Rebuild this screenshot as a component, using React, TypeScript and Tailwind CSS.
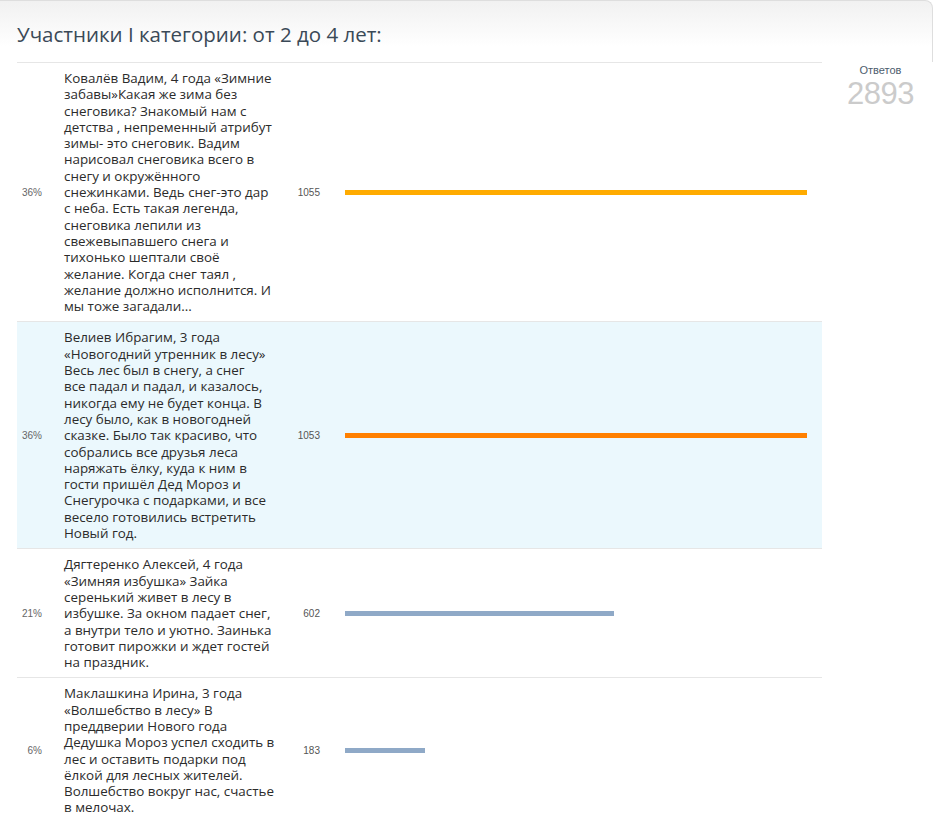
import React from "react";

interface PollOption {
  percent: string;
  votes: number;
  lines: string[];
  barWidth: number;
  barColor: string;
  highlight?: boolean;
}

const OPTIONS: PollOption[] = [
  {
    percent: "36%",
    votes: 1055,
    barWidth: 462,
    barColor: "bg-[#ffab00]",
    lines: [
      "Ковалёв Вадим, 4 года «Зимние",
      "забавы»Какая же зима без",
      "снеговика? Знакомый нам с",
      "детства , непременный атрибут",
      "зимы- это снеговик. Вадим",
      "нарисовал снеговика всего в",
      "снегу и окружённого",
      "снежинками. Ведь снег-это дар",
      "с неба. Есть такая легенда,",
      "снеговика лепили из",
      "свежевыпавшего снега и",
      "тихонько шептали своё",
      "желание. Когда снег таял ,",
      "желание должно исполнится. И",
      "мы тоже загадали...",
    ],
  },
  {
    percent: "36%",
    votes: 1053,
    barWidth: 462,
    barColor: "bg-[#ff8000]",
    highlight: true,
    lines: [
      "Велиев Ибрагим, 3 года",
      "«Новогодний утренник в лесу»",
      "Весь лес был в снегу, а снег",
      "все падал и падал, и казалось,",
      "никогда ему не будет конца. В",
      "лесу было, как в новогодней",
      "сказке. Было так красиво, что",
      "собрались все друзья леса",
      "наряжать ёлку, куда к ним в",
      "гости пришёл Дед Мороз и",
      "Снегурочка с подарками, и все",
      "весело готовились встретить",
      "Новый год.",
    ],
  },
  {
    percent: "21%",
    votes: 602,
    barWidth: 269,
    barColor: "bg-[#8fa9c7]",
    lines: [
      "Дягтеренко Алексей, 4 года",
      "«Зимняя избушка» Зайка",
      "серенький живет в лесу в",
      "избушке. За окном падает снег,",
      "а внутри тело и уютно. Заинька",
      "готовит пирожки и ждет гостей",
      "на праздник.",
    ],
  },
  {
    percent: "6%",
    votes: 183,
    barWidth: 80,
    barColor: "bg-[#8fa9c7]",
    lines: [
      "Маклашкина Ирина, 3 года",
      "«Волшебство в лесу» В",
      "преддверии Нового года",
      "Дедушка Мороз успел сходить в",
      "лес и оставить подарки под",
      "ёлкой для лесных жителей.",
      "Волшебство вокруг нас, счастье",
      "в мелочах.",
    ],
  },
];

function OptionRow({ option, first }: { option: PollOption; first: boolean }) {
  return (
    <div
      className={
        "flex items-center " +
        (first ? "" : "border-t border-[#e6e6e6] ") +
        (option.highlight ? "bg-[#ebf8fd]" : "bg-white")
      }
    >
      <div className="w-[47px] shrink-0 pr-[22px] text-right font-['Liberation_Sans',sans-serif] text-[10px] text-[#666]">
        {option.percent}
      </div>
      <div className="w-[211px] shrink-0 py-[7px] font-['Open_Sans',sans-serif] text-[13.4px] leading-[16.3px] text-[#2b2b2b]">
        {option.lines.map((line, i) => (
          <div key={i} className="whitespace-nowrap">
            {line}
          </div>
        ))}
      </div>
      <div className="w-[45px] shrink-0 text-right font-['Liberation_Sans',sans-serif] text-[10px] text-[#555]">
        {option.votes}
      </div>
      <div className="pl-[25px]">
        <div
          className={"h-[5px] " + option.barColor}
          style={{ width: option.barWidth }}
        />
      </div>
    </div>
  );
}

export default function App() {
  return (
    <div className="min-h-screen bg-white">
      <div className="h-[62px] rounded-tr-lg border-t border-r border-[#dedede] bg-gradient-to-b from-[#f1f1f1] to-white to-75% px-[17px] pt-[20px]">
        <h2 className="font-['Open_Sans',sans-serif] text-[20.5px] leading-[27px] text-[#3a4957]">
          Участники I категории: от 2 до 4 лет:
        </h2>
      </div>

      <div className="flex">
        <div className="ml-[17px] w-[805px] border-t border-[#e6e6e6]">
          {OPTIONS.map((option, i) => (
            <OptionRow key={i} option={option} first={i === 0} />
          ))}
        </div>

        <div className="flex flex-1 flex-col items-center pl-[6px] pt-[1px] font-['Liberation_Sans',sans-serif]">
          <span className="text-[11px] leading-[14px] text-[#4d5d6d]">Ответов</span>
          <span className="text-[31px] leading-[34px] tracking-[-0.5px] text-[#cbcbcb]">
            2893
          </span>
        </div>
      </div>
    </div>
  );
}
